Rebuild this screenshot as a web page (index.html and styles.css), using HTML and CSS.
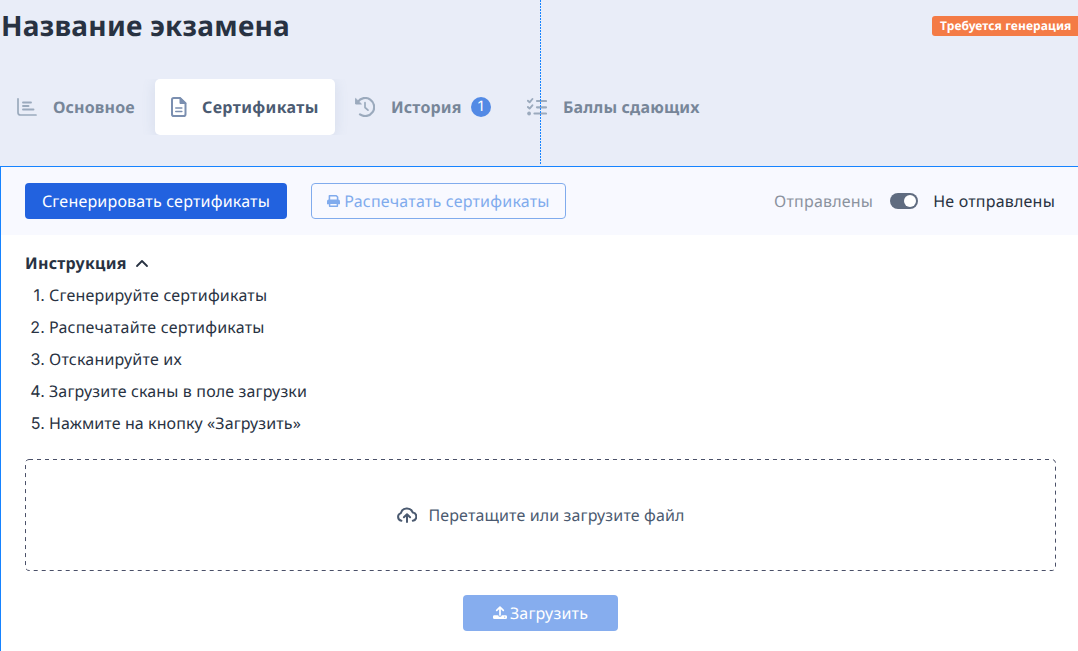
FILE: index.html
```html
<!DOCTYPE html>
<html lang="ru">
<head>
<meta charset="utf-8">
<title>Название экзамена</title>
<link rel="stylesheet" href="styles.css">
</head>
<body>
<div class="page">
  <header class="header">
    <h1 class="title">Название экзамена</h1>
    <span class="badge">Требуется генерация</span>
  </header>
  <nav class="tabs">
    <a class="tab tab-main">
      <svg class="tab-icon" viewBox="0 0 20 20" fill="none" stroke="currentColor" stroke-linecap="round" stroke-linejoin="round"><path stroke-width="1.7" d="M1 1.8V15.5Q1 18 3.5 18H19"/><path stroke-width="1.9" d="M6 5.5H14M6 9H11.5M6 12.5H16.5"/></svg>
      <span class="tab-label">Основное</span>
    </a>
    <a class="tab tab-active">
      <svg class="tab-icon" viewBox="0 0 20 20" fill="none" stroke="currentColor" stroke-linejoin="round" stroke-linecap="round"><path stroke-width="2" d="M4.7 1H11L16.5 6.3V17.2Q16.5 19 14.7 19H4.7Q3 19 3 17.2V2.8Q3 1 4.7 1Z"/><path fill="currentColor" d="M11 1V6.5H16.5Z"/><path stroke-width="1.6" d="M6.8 11H12.8M6.8 14.5H12.8"/></svg>
      <span class="tab-label">Сертификаты</span>
    </a>
    <a class="tab tab-history">
      <svg class="tab-icon" viewBox="0 0 20 20" fill="none" stroke="currentColor" stroke-linecap="round" stroke-linejoin="round"><path stroke-width="2.2" d="M2.7 5A9 9 0 1 1 5 17.4"/><path fill="currentColor" stroke-width="1" d="M.6 1.8V7H6Z"/><path stroke-width="1.7" d="M10 5.7V10.5L13 13.2"/></svg>
      <span class="tab-label">История</span>
      <span class="count">1</span>
    </a>
    <a class="tab tab-scores">
      <svg class="tab-icon" viewBox="0 0 20 20" fill="none" stroke="currentColor" stroke-linecap="round" stroke-linejoin="round"><path stroke-width="1.9" d="M.9 3.7L2.6 5.3L5.4 2M.9 10L2.6 11.6L5.4 8.3"/><path stroke-width="2.2" d="M10 4H19M10 10.3H19M7.5 16.5H19"/><circle cx="2.1" cy="16.5" r="1.9" fill="currentColor" stroke="none"/></svg>
      <span class="tab-label">Баллы сдающих</span>
    </a>
  </nav>
  <main class="panel">
    <div class="toolbar">
      <button class="btn btn-primary">Сгенерировать сертификаты</button>
      <button class="btn btn-outline">
        <svg class="print-icon" viewBox="0 0 14 14" fill="none" stroke="currentColor" stroke-linejoin="round"><path stroke-width="1.7" d="M2.6 5.8V1.3H10L11.4 2.7V5.8"/><path fill="currentColor" stroke="none" d="M2 5.3H12Q14 5.3 14 7.3V10.6H0V7.3Q0 5.3 2 5.3Z"/><path fill="#f8f9ff" stroke-width="1.6" d="M2.8 9.4H11.2V12.7H2.8Z"/></svg>
        <span class="btn-text">Распечатать сертификаты</span>
      </button>
      <div class="filter">
        <span class="filter-off">Отправлены</span>
        <span class="switch"></span>
        <span class="filter-on">Не отправлены</span>
      </div>
    </div>
    <section class="content">
      <h2 class="subtitle"><span class="subtitle-text">Инструкция</span>
        <svg class="chevron" viewBox="0 0 14 10" fill="none" stroke="currentColor" stroke-width="1.8" stroke-linecap="round" stroke-linejoin="round"><path d="M2 8L7 3L12 8"/></svg>
      </h2>
      <ol class="steps">
        <li class="step"><span class="num">1.</span><span class="step-text">Сгенерируйте сертификаты</span></li>
        <li class="step"><span class="num">2.</span><span class="step-text">Распечатайте сертификаты</span></li>
        <li class="step"><span class="num">3.</span><span class="step-text">Отсканируйте их</span></li>
        <li class="step"><span class="num">4.</span><span class="step-text step-tight">Загрузите сканы в поле загрузки</span></li>
        <li class="step"><span class="num">5.</span><span class="step-text step-tighter">Нажмите на кнопку «Загрузить»</span></li>
      </ol>
      <div class="dropzone">
        <svg class="drop-border" width="1031" height="112"><rect x=".5" y=".5" width="1030" height="111" rx="3.5" fill="none" stroke="#4a5068" stroke-dasharray="4 4"/></svg>
        <svg class="cloud-icon" viewBox="0 0 20 16" fill="none" stroke="currentColor" stroke-width="2" stroke-linecap="round" stroke-linejoin="round"><path d="M4.4 13.7A3.9 3.9 0 0 1 3.9 6.1A6.2 6.2 0 0 1 15.7 5.4A4.2 4.2 0 0 1 15.8 13.7"/><path d="M10 15V8M6.9 10.2L10 7.2L13.1 10.2"/></svg>
        <span class="drop-text">Перетащите или загрузите файл</span>
      </div>
      <button class="btn btn-upload">
        <svg class="upload-icon" viewBox="0 0 14 14" fill="none" stroke="currentColor" stroke-linecap="round" stroke-linejoin="round"><path stroke-width="1.7" d="M7 9V2M3.7 4.3L7 1.2L10.3 4.3"/><path fill="currentColor" stroke="none" d="M1.4 9.2H5.2Q5.5 10.7 7 10.7Q8.5 10.7 8.8 9.2H12.6Q14 9.2 14 10.6V11.7Q14 13.1 12.6 13.1H1.4Q0 13.1 0 11.7V10.6Q0 9.2 1.4 9.2Z"/><circle cx="11.7" cy="11.1" r=".6" fill="#86adee" stroke="none"/></svg>
        <span class="btn-text">Загрузить</span>
      </button>
    </section>
  </main>
  <div class="guide"></div>
</div>
</body>
</html>
```
FILE: styles.css
```css
* { box-sizing: border-box; }
body {
  margin: 0;
  background: #e9edf8;
  font-family: "Noto Sans", sans-serif;
  font-size: 16px;
  line-height: 24px;
  color: #283242;
  text-rendering: geometricPrecision;
  letter-spacing: .2px;
}
.page {
  position: relative;
  display: flex;
  flex-direction: column;
  width: 1078px;
  height: 651px;
  overflow: hidden;
}
.header {
  display: flex;
  align-items: center;
  justify-content: space-between;
  height: 52px;
}
.title {
  margin: 0;
  padding-left: 1px;
  font-size: 28px;
  font-weight: 700;
  line-height: 36px;
  letter-spacing: .25px;
  white-space: nowrap;
}
.badge {
  width: 146px;
  height: 20px;
  padding-left: 8px;
  border-radius: 3px 0 0 3px;
  background: #f47b46;
  color: #fff;
  font-size: 12px;
  font-weight: 700;
  line-height: 20px;
  letter-spacing: .1px;
  white-space: nowrap;
}
.tabs {
  display: flex;
  height: 56px;
  margin-top: 27px;
  overflow: hidden;
  flex: none;
}
.tab {
  display: flex;
  align-items: center;
  padding-left: 17px;
  color: #9baabd;
  font-weight: 700;
  letter-spacing: .15px;
  white-space: nowrap;
}
.tab-main { width: 155px; }
.tab-history { width: 172px; padding-left: 20px; }
.tab-scores { padding-left: 20px; }
.tab-label { margin-left: 16px; color: #778699; }
.tab-icon { width: 20px; height: 20px; flex: none; }
.tab-active {
  width: 180px;
  padding-left: 14px;
  border-radius: 5px;
  background: #fff;
  color: #7b8fb0;
  letter-spacing: .35px;
  box-shadow: 0 2px 14px rgba(100, 130, 160, .15);
}
.tab-active .tab-label { margin-left: 13px; color: #4b5b72; }
.count {
  width: 20px;
  height: 20px;
  margin-left: 9px;
  border-radius: 50%;
  background: #538ae5;
  color: #fff;
  font: 400 14px/20px Inter, sans-serif;
  text-align: center;
}
.panel {
  flex: 1;
  margin-top: 31px;
  border-top: 1px solid #1683ff;
  border-left: 1px solid #1683ff;
  background: #fff;
}
.toolbar {
  display: flex;
  align-items: center;
  gap: 24px;
  height: 68px;
  padding: 0 23px 0 24px;
  background: #f8f9ff;
}
.btn {
  display: flex;
  align-items: center;
  justify-content: center;
  height: 36px;
  padding: 0;
  border: 1px solid transparent;
  border-radius: 4px;
  font: 16px/24px "Noto Sans", sans-serif;
  letter-spacing: .2px;
  text-rendering: inherit;
  white-space: nowrap;
}
.btn-primary { width: 262px; background: #2262df; color: #fff; }
.btn-outline {
  width: 255px;
  gap: 4px;
  border-color: #80abed;
  background: transparent;
  color: #80abed;
}
.print-icon { width: 13px; height: 14px; }
.filter { display: flex; align-items: center; margin-left: auto; white-space: nowrap; }
.filter-off { color: #8b929e; }
.switch {
  display: flex;
  align-items: center;
  justify-content: flex-end;
  width: 28px;
  height: 16px;
  margin: 0 15px 0 17px;
  padding: 2px;
  border-radius: 8px;
  background: #606c80;
}
.switch::after { content: ""; width: 12px; height: 12px; border-radius: 50%; background: #fff; }
.content { padding: 16px 22px 0 24px; }
.subtitle { display: flex; align-items: center; gap: 8px; margin: 0; font-size: 16px; line-height: 24px; letter-spacing: .25px; }
.chevron { width: 14px; height: 10px; }
.steps { margin: 4px 0 0; padding: 0; list-style: none; }
.step { display: flex; height: 32px; padding-top: 4px; align-items: baseline; }
.step-tight { letter-spacing: .14px; }
.step-tighter { letter-spacing: .1px; }
.num { width: 20px; margin-right: 4px; font: 16px/24px Inter, sans-serif; text-align: right; }
.dropzone {
  position: relative;
  display: flex;
  align-items: center;
  justify-content: center;
  gap: 11px;
  height: 112px;
  margin-top: 20px;
  padding-left: 1px;
  color: #4b5a70;
  letter-spacing: .13px;
}
.drop-border { position: absolute; left: 0; top: 0; }
.cloud-icon { width: 20px; height: 16px; }
.btn-upload { width: 155px; gap: 3px; margin: 24px auto 0; background: #86adee; color: #fff; }
.upload-icon { width: 14px; height: 14px; }
.guide {
  position: absolute;
  left: 540px;
  top: 0;
  width: 1px;
  height: 165px;
  background: repeating-linear-gradient(#1683ff 0 2px, transparent 2px 3px);
}
```
